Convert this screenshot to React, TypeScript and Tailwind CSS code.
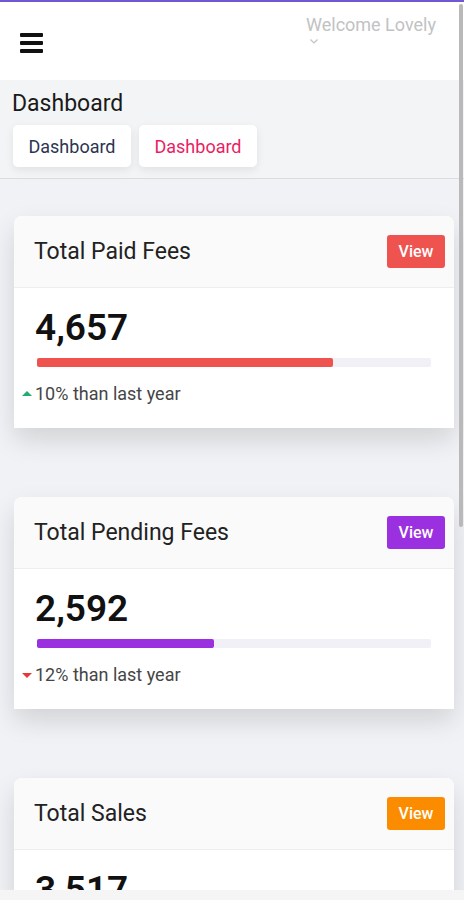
import React from "react";

type CardProps = {
  title: string;
  value: string;
  color: string;
  btn: string;
  pct: number;
  up: boolean;
  delta: string;
};

function StatCard({ title, value, btn, color, pct, up, delta }: CardProps) {
  return (
    <div className="ml-[14px] w-[440px] rounded-t-[8px] bg-white shadow-[0_12px_26px_rgba(0,0,0,0.13)]">
      <div className="flex h-[72px] items-center justify-between rounded-t-[8px] border-b border-[#eeeeee] bg-[#fafafa] pl-[20px] pr-[9px]">
        <span className="text-[23px] leading-[28px] text-[#222222]">{title}</span>
        <button className={`flex h-[33px] w-[58px] items-center justify-center rounded-[3px] text-[16px] font-medium text-white ${btn}`}>
          View
        </button>
      </div>
      <div className="pl-[21px] pr-[23px] pt-[18px] pb-[21px]">
        <div className="text-[37px] font-semibold leading-[44px] text-[#111111]">{value}</div>
        <div className="ml-[2px] mt-[8px] h-[9px] rounded-[2px] bg-[#f1f0f6]">
          <div className={`h-[9px] rounded-[2px] ${color}`} style={{ width: `${pct}%` }} />
        </div>
        <div className="-ml-[14px] mt-[13px] flex h-[27px] items-center">
          {up ? (
            <span className="ml-[1px] mr-[3px] h-0 w-0 border-l-[5px] border-r-[5px] border-b-[5px] border-l-transparent border-r-transparent border-b-[#1fae6f]" />
          ) : (
            <span className="ml-[1px] mr-[3px] mt-[2px] h-0 w-0 border-l-[5px] border-r-[5px] border-t-[5px] border-l-transparent border-r-transparent border-t-[#e53935]" />
          )}
          <span className="text-[18px] leading-[27px] text-[#454545]">{delta}</span>
        </div>
      </div>
    </div>
  );
}

export default function App() {
  return (
    <div className="relative h-[900px] overflow-hidden bg-[#f1f2f5] font-['Roboto',sans-serif]">
      <div className="h-[2px] bg-[#6f58d0]" />
      <header className="flex h-[78px] justify-between bg-white">
        <div className="pl-[20px] pt-[31px]">
          <div className="flex w-[23px] flex-col gap-[4px]">
            <span className="h-[4px] rounded-[1px] bg-[#111111]" />
            <span className="h-[4px] rounded-[1px] bg-[#111111]" />
            <span className="h-[4px] rounded-[1px] bg-[#111111]" />
          </div>
        </div>
        <div className="pr-[28px] pt-[12px]">
          <div className="text-[18px] leading-[21px] text-[#c2c2c2]">Welcome Lovely</div>
          <svg className="ml-[4px] mt-[4px]" width="8" height="5" viewBox="0 0 8 5" fill="none">
            <path d="M0.5 0.5 L4 4 L7.5 0.5" stroke="#c2c2c2" strokeWidth="1.2" />
          </svg>
        </div>
      </header>
      <section className="border-b border-[#dcdcdc] bg-[#f3f4f6] px-[12px] pt-[10px] pb-[11px]">
        <h1 className="text-[23px] leading-[28px] text-[#1a1a1a]">Dashboard</h1>
        <div className="ml-[1px] mt-[7px] flex gap-[8px]">
          <div className="flex h-[42px] w-[118px] items-center justify-center rounded-[5px] bg-white text-[18px] text-[#2b3452] shadow-[0_3px_8px_rgba(0,0,0,0.08)]">
            Dashboard
          </div>
          <div className="flex h-[42px] w-[118px] items-center justify-center rounded-[5px] bg-white text-[18px] text-[#e91e63] shadow-[0_3px_8px_rgba(0,0,0,0.08)]">
            Dashboard
          </div>
        </div>
      </section>
      <main className="flex flex-col gap-[69px] pt-[37px]">
        <StatCard title="Total Paid Fees" value="4,657" btn="bg-[#ef5350]" color="bg-[#ef5350]" pct={75} up delta="10% than last year" />
        <StatCard title="Total Pending Fees" value="2,592" btn="bg-[#9b30e0]" color="bg-[#9b30e0]" pct={45} up={false} delta="12% than last year" />
        <StatCard title="Total Sales" value="3,517" btn="bg-[#fb8c00]" color="bg-[#fb8c00]" pct={60} up delta="8% than last year" />
      </main>
      <div className="absolute right-[1px] top-[4px] h-[523px] w-[4px] rounded-[2px] bg-[#b9b9b9]" />
      <div className="absolute bottom-0 left-0 h-[10px] w-full bg-[#f5f5f5]" />
    </div>
  );
}
